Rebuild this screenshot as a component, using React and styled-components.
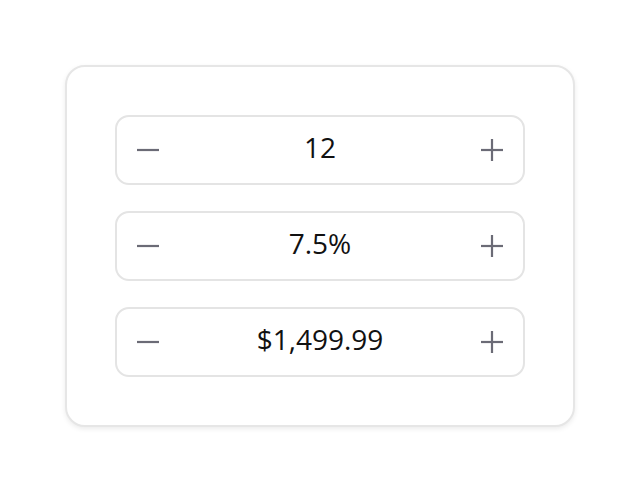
import React from "react";
import styled, { createGlobalStyle } from "styled-components";

const Global = createGlobalStyle`
  html, body { margin: 0; padding: 0; background: #ffffff; }
  body { font-family: "Open Sans", "Noto Sans", sans-serif; }
`;

const Page = styled.div`
  width: 640px;
  height: 492px;
  display: flex;
  align-items: center;
  justify-content: center;
`;

const Card = styled.div`
  box-sizing: border-box;
  width: 510px;
  padding: 48px;
  background: #ffffff;
  border: 2px solid #e6e6e6;
  border-radius: 20px;
  box-shadow: 0 2px 5px rgba(0, 0, 0, 0.08);
  display: flex;
  flex-direction: column;
  gap: 26px;
`;

const Stepper = styled.div`
  box-sizing: border-box;
  height: 70px;
  border: 2px solid #e4e4e4;
  border-radius: 14px;
  display: flex;
  align-items: center;
  padding: 0 20px;
`;

const StepButton = styled.button`
  width: 22px;
  height: 22px;
  padding: 0;
  border: none;
  background: transparent;
  display: flex;
  align-items: center;
  justify-content: center;
  color: #6b6b76;
  cursor: pointer;
`;

const Value = styled.div`
  flex: 1;
  text-align: center;
  font-size: 28px;
  color: #111111;
  line-height: 1;
  margin-top: -6px;
`;

const MinusIcon = () => (
  <svg width="22" height="22" viewBox="0 0 22 22">
    <line x1="0" y1="11" x2="22" y2="11" stroke="currentColor" strokeWidth="2.2" />
  </svg>
);

const PlusIcon = () => (
  <svg width="22" height="22" viewBox="0 0 22 22">
    <line x1="0" y1="11" x2="22" y2="11" stroke="currentColor" strokeWidth="2.2" />
    <line x1="11" y1="0" x2="11" y2="22" stroke="currentColor" strokeWidth="2.2" />
  </svg>
);

const values = ["12", "7.5%", "$1,499.99"];

export default function App() {
  return (
    <>
      <Global />
      <Page>
        <Card>
          {values.map((v) => (
            <Stepper key={v}>
              <StepButton aria-label="Decrease">
                <MinusIcon />
              </StepButton>
              <Value>{v}</Value>
              <StepButton aria-label="Increase">
                <PlusIcon />
              </StepButton>
            </Stepper>
          ))}
        </Card>
      </Page>
    </>
  );
}
